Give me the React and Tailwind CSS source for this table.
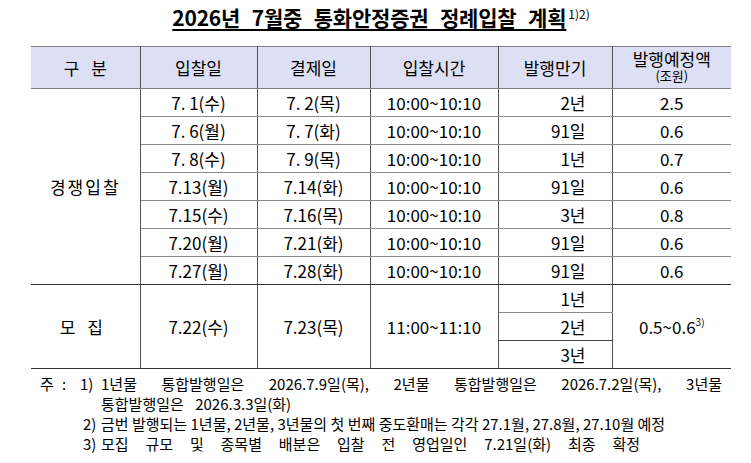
const rows = [
  ['7. 1(수)', '7. 2(목)', '2년', '2.5'],
  ['7. 6(월)', '7. 7(화)', '91일', '0.6'],
  ['7. 8(수)', '7. 9(목)', '1년', '0.7'],
  ['7.13(월)', '7.14(화)', '91일', '0.6'],
  ['7.15(수)', '7.16(목)', '3년', '0.8'],
  ['7.20(월)', '7.21(화)', '91일', '0.6'],
  ['7.27(월)', '7.28(화)', '91일', '0.6'],
]

function App() {
  return (
    <div className="bg-white w-[751px] h-[463px] overflow-hidden font-['Noto_Sans_CJK_KR',sans-serif] text-black">
      <div className="ml-[31px] w-[700px]">
        {/* Title */}
        <div className="pt-[3px] h-[46px] text-center">
          <span className="text-[21px] leading-[28px] font-bold underline underline-offset-[3px] decoration-[1.5px] tracking-[-0.2px] [word-spacing:7px]">
            2026년 7월중 통화안정증권 정례입찰 계획
          </span>
          <sup className="text-[12px] ml-[2px] -top-[0.6em]">1)2)</sup>
        </div>

        {/* Table */}
        <table className="table-fixed w-[700px] border-collapse text-[17px] leading-[20px]">
          <colgroup>
            <col className="w-[109px]" />
            <col className="w-[117px]" />
            <col className="w-[113px]" />
            <col className="w-[128px]" />
            <col className="w-[114px]" />
            <col className="w-[119px]" />
          </colgroup>
          <thead>
            <tr className="h-[42px] bg-[#dde0f5]">
              <th className="font-normal [word-spacing:8px] border-t border-b border-[#808080] border-r-[#555] border-r">구 분</th>
              <th className="font-normal border-t border-b border-[#808080] border-r-[#555] border-r">입찰일</th>
              <th className="font-normal border-t border-b border-[#808080] border-r-[#555] border-r">결제일</th>
              <th className="font-normal border-t border-b border-[#808080] border-r-[#555] border-r">입찰시간</th>
              <th className="font-normal border-t border-b border-[#808080] border-r-[#555] border-r">발행만기</th>
              <th className="font-normal border-t border-b border-[#808080] align-top pt-[2px]">
                <div className="leading-[20px]">발행예정액</div>
                <div className="text-[13px] leading-[14px]">(조원)</div>
              </th>
            </tr>
          </thead>
          <tbody>
            {rows.map((r, i) => {
              const last = i === rows.length - 1
              const rowLine = last ? 'border-b border-[#333]' : 'border-b border-[#8a8a8a]'
              return (
                <tr key={i} className="h-[28px]">
                  {i === 0 && (
                    <td rowSpan={7} className="text-center tracking-[2px] border-r border-[#555] border-b border-b-[#333]">
                      경쟁입찰
                    </td>
                  )}
                  <td className={`text-center border-r border-r-[#555] ${rowLine}`}>{r[0]}</td>
                  <td className={`text-center border-r border-r-[#555] ${rowLine}`}>{r[1]}</td>
                  <td className={`text-center border-r border-r-[#555] ${rowLine}`}>10:00~10:10</td>
                  <td className={`text-right pr-[26px] border-r border-r-[#555] ${rowLine}`}>{r[2]}</td>
                  <td className={`text-center ${rowLine}`}>{r[3]}</td>
                </tr>
              )
            })}
            <tr className="h-[28px]">
              <td rowSpan={3} className="text-center pr-[8px] [word-spacing:8px] border-r border-[#555] border-b border-b-[#333]">모 집</td>
              <td rowSpan={3} className="text-center border-r border-[#555] border-b border-b-[#333]">7.22(수)</td>
              <td rowSpan={3} className="text-center border-r border-[#555] border-b border-b-[#333]">7.23(목)</td>
              <td rowSpan={3} className="text-center border-r border-[#555] border-b border-b-[#333]">11:00~11:10</td>
              <td className="text-right pr-[26px] border-r border-r-[#555] border-b border-b-[#8a8a8a]">1년</td>
              <td rowSpan={3} className="text-center border-b border-[#333]">
                0.5~0.6<sup className="text-[10px] -top-[0.8em]">3)</sup>
              </td>
            </tr>
            <tr className="h-[28px]">
              <td className="text-right pr-[26px] border-r border-r-[#555] border-b border-b-[#444]">2년</td>
            </tr>
            <tr className="h-[28px]">
              <td className="text-right pr-[26px] border-r border-r-[#555] border-b border-b-[#333]">3년</td>
            </tr>
          </tbody>
        </table>
      </div>

      {/* Notes */}
      <div className="mt-[5px] text-[15px] leading-[20px]">
        <div className="flex">
          <div className="w-[40px] shrink-0" />
          <div className="w-[22px] shrink-0">주</div>
          <div className="w-[18px] shrink-0">:</div>
          <div className="w-[21px] shrink-0">1)</div>
          <div className="w-[621px]">
            <div className="[text-align-last:justify]">
              1년물 통합발행일은 2026.7.9일(목), 2년물 통합발행일은 2026.7.2일(목), 3년물
            </div>
            <div className="[word-spacing:8px]">통합발행일은 2026.3.3일(화)</div>
          </div>
        </div>
        <div className="flex">
          <div className="w-[83px] shrink-0" />
          <div className="w-[18px] shrink-0">2)</div>
          <div>금번 발행되는 1년물, 2년물, 3년물의 첫 번째 중도환매는 각각 27.1월, 27.8월, 27.10월 예정</div>
        </div>
        <div className="flex">
          <div className="w-[83px] shrink-0" />
          <div className="w-[18px] shrink-0">3)</div>
          <div className="w-[539px] [text-align-last:justify]">
            모집 규모 및 종목별 배분은 입찰 전 영업일인 7.21일(화) 최종 확정
          </div>
        </div>
      </div>
    </div>
  )
}

export default App
